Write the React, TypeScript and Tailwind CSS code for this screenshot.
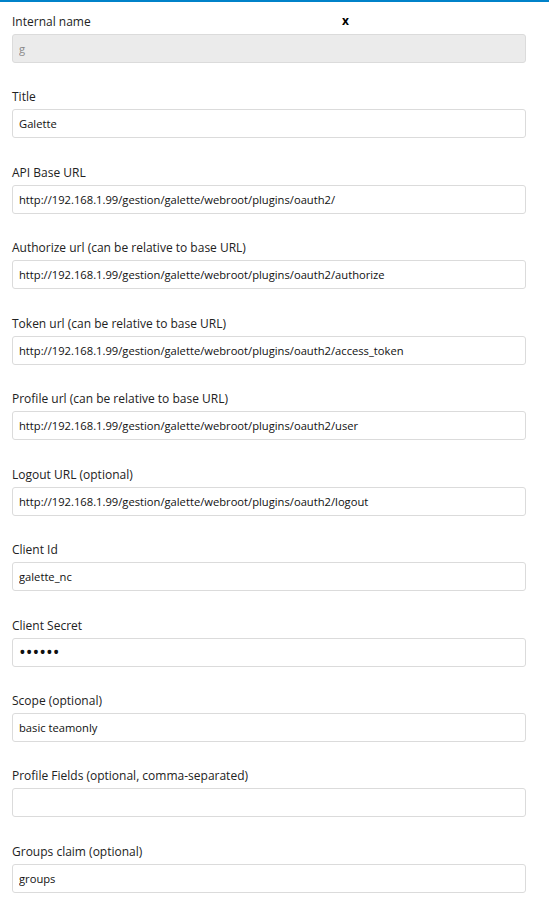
const fields = [
  { label: "Internal name", value: "g", disabled: true },
  { label: "Title", value: "Galette" },
  { label: "API Base URL", value: "http://192.168.1.99/gestion/galette/webroot/plugins/oauth2/" },
  { label: "Authorize url (can be relative to base URL)", value: "http://192.168.1.99/gestion/galette/webroot/plugins/oauth2/authorize" },
  { label: "Token url (can be relative to base URL)", value: "http://192.168.1.99/gestion/galette/webroot/plugins/oauth2/access_token" },
  { label: "Profile url (can be relative to base URL)", value: "http://192.168.1.99/gestion/galette/webroot/plugins/oauth2/user" },
  { label: "Logout URL (optional)", value: "http://192.168.1.99/gestion/galette/webroot/plugins/oauth2/logout" },
  { label: "Client Id", value: "galette_nc" },
  { label: "Client Secret", value: "secret", password: true },
  { label: "Scope (optional)", value: "basic teamonly" },
  { label: "Profile Fields (optional, comma-separated)", value: "" },
  { label: "Groups claim (optional)", value: "groups" },
];

export default function App() {
  return (
    <div className="relative min-h-[905px] w-[549px] bg-white border-t-2 border-[#0082c9] font-['Open_Sans',sans-serif]">
      {/* close button */}
      <button className="absolute left-[342px] top-[13px] text-[12px] font-bold leading-none text-black">x</button>

      <div className="flex flex-col gap-[24.45px] px-[12px] pt-[10px]">
        {fields.map((f, i) => (
          <div key={i} className="flex flex-col">
            <label className="h-[18px] text-[12px] leading-[20px] text-[#222]">{f.label}</label>
            <input
              readOnly
              disabled={f.disabled}
              type={f.password ? "password" : "text"}
              value={f.value}
              className={`mt-[4px] h-[29px] w-[514px] rounded-[3px] border border-[#dbdbdb] px-[6px] outline-none ${
                f.password ? "text-[18px]" : "text-[11.2px]"
              } ${f.disabled ? "bg-[#ebebeb] text-[#8a8a8a]" : "bg-white text-[#111]"}`}
            />
          </div>
        ))}
      </div>
    </div>
  );
}
